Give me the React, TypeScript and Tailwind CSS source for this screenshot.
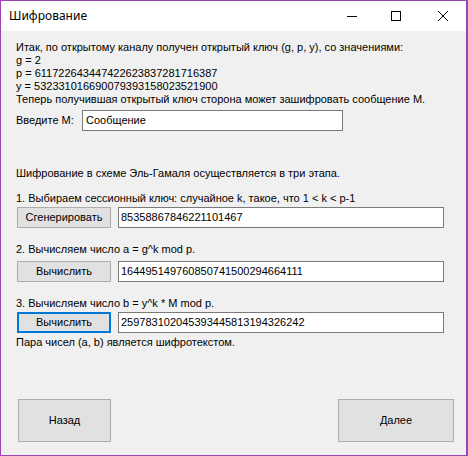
import { useState } from 'react'

const font = "font-['Liberation_Sans',Arial,sans-serif]"

function WinButton({ label, focused = false, className = '' }: { label: string; focused?: boolean; className?: string }) {
  return (
    <button
      type="button"
      className={
        focused
          ? `flex shrink-0 items-center justify-center border-2 border-[#0078d7] bg-[#e1e1e1] text-black ${className}`
          : `flex shrink-0 items-center justify-center border border-[#adadad] bg-[#e1e1e1] text-black ${className}`
      }
    >
      {label}
    </button>
  )
}

function TextBox({ value, className = '' }: { value: string; className?: string }) {
  return (
    <div className={`flex items-center border border-[#7a7a7a] bg-white pl-[2px] text-black ${className}`}>
      {value}
    </div>
  )
}

function StepRow({ button, value, focused }: { button: string; value: string; focused?: boolean }) {
  return (
    <div className="flex h-[21px] items-stretch gap-[7px] pl-[1px]">
      <WinButton label={button} focused={focused} className="w-[94px]" />
      <TextBox value={value} className="w-[326px]" />
    </div>
  )
}

export default function App() {
  const [message] = useState('Сообщение')

  return (
    <div className={`flex h-[456px] w-[468px] flex-col border border-r-2 border-[#9b45b2] bg-[#f0f0f0] text-[11px] leading-[13px] text-black ${font}`}>
      <div className="flex h-[30px] shrink-0 items-center bg-white">
        <span className="pl-[8px] font-['Noto_Sans',sans-serif] text-[12px] leading-[16px] text-black">Шифрование</span>
        <div className="ml-auto flex h-full pr-[1px]">
          <div className="flex h-full w-[46px] items-center justify-center pl-[4px]">
            <svg width="10" height="10" viewBox="0 0 10 10">
              <line x1="0" y1="5.5" x2="10" y2="5.5" stroke="#000" strokeWidth="1" />
            </svg>
          </div>
          <div className="flex h-full w-[46px] items-center justify-center">
            <svg width="10" height="10" viewBox="0 0 10 10">
              <rect x="0.5" y="0.5" width="9" height="9" fill="none" stroke="#000" strokeWidth="1" />
            </svg>
          </div>
          <div className="flex h-full w-[46px] items-center justify-center pl-[2px]">
            <svg width="10" height="10" viewBox="0 0 10 10">
              <path d="M0 0L10 10M10 0L0 10" stroke="#000" strokeWidth="1" />
            </svg>
          </div>
        </div>
      </div>

      <div className="flex flex-1 flex-col pl-[15px]">
        <div className="mt-[10px]">
          <div>Итак, по открытому каналу получен открытый ключ (g, p, y), со значениями:</div>
          <div>g = 2</div>
          <div>p = 611722643447422623837281716387</div>
          <div>y = 532331016690079393158023521900</div>
        </div>
        <div>Теперь получившая открытый ключ сторона может зашифровать сообщение M.</div>

        <div className="mt-[4px] flex h-[21px] items-center">
          <span className="w-[66px] shrink-0">Введите M:</span>
          <TextBox value={message} className="h-full w-[261px] pl-[3px]" />
        </div>

        <div className="mt-[36px]">Шифрование в схеме Эль-Гамаля осуществляется в три этапа.</div>

        <div className="mt-[12px]">1. Выбираем сессионный ключ: случайное k, такое, что 1 &lt; k &lt; p-1</div>
        <div className="mt-[2px]">
          <StepRow button="Сгенерировать" value="85358867846221101467" />
        </div>

        <div className="mt-[15px]">2. Вычисляем число a = g^k mod p.</div>
        <div className="mt-[5px]">
          <StepRow button="Вычислить" value="164495149760850741500294664111" />
        </div>

        <div className="mt-[15px]">3. Вычисляем число b = y^k * M mod p.</div>
        <div className="mt-[2px]">
          <StepRow button="Вычислить" value="259783102045393445813194326242" focused />
        </div>

        <div className="mt-[3px]">Пара чисел (a, b) является шифротекстом.</div>

        <div className="mb-[13px] mt-auto flex items-stretch pr-[12px]">
          <WinButton label="Назад" className="ml-[2px] h-[43px] w-[93px]" />
          <WinButton label="Далее" className="ml-auto h-[43px] w-[116px]" />
        </div>
      </div>
    </div>
  )
}
